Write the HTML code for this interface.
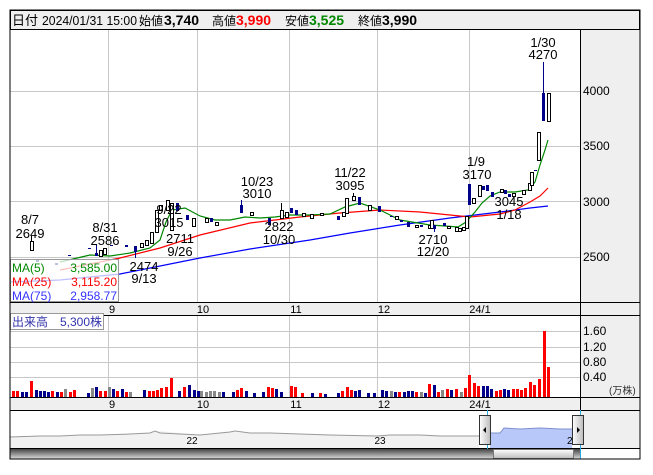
<!DOCTYPE html>
<html><head><meta charset="utf-8"><style>
body{margin:0;background:#fff;width:653px;height:470px;overflow:hidden;font-family:"Liberation Sans","Noto Sans CJK JP",sans-serif}
svg text{font-family:"Liberation Sans","Noto Sans CJK JP",sans-serif}
</style></head><body>
<svg id="s" width="653" height="470" xmlns="http://www.w3.org/2000/svg">
<rect x="10" y="10" width="630" height="449" fill="#fff" stroke="#000"/>
<rect x="10.5" y="10.5" width="629" height="19" fill="#efefef" stroke="#000"/>
<g font-size="13">
<text x="12" y="25">日付</text>
<text x="42" y="25" textLength="95" lengthAdjust="spacingAndGlyphs">2024/01/31 15:00</text>
<text x="139" y="25" font-size="12">始値</text>
<text x="164" y="25" font-weight="bold" font-size="14">3,740</text>
<text x="212" y="25" font-size="12">高値</text>
<text x="236" y="25" font-weight="bold" font-size="14" fill="#f00">3,990</text>
<text x="285" y="25" font-size="12">安値</text>
<text x="309" y="25" font-weight="bold" font-size="14" fill="#080">3,525</text>
<text x="358" y="25" font-size="12">終値</text>
<text x="382" y="25" font-weight="bold" font-size="14">3,990</text>
</g>
<rect x="580" y="30" width="60" height="272" fill="#efefef"/>
<rect x="580" y="315" width="60" height="82" fill="#efefef"/>
<rect x="580" y="410" width="60" height="38" fill="#efefef"/>
<rect x="10" y="302" width="630" height="13" fill="#efefef"/>
<rect x="10" y="397" width="630" height="13" fill="#efefef"/>
<g stroke="#000" stroke-width="1">
<line x1="580.5" y1="30" x2="580.5" y2="459"/>
<line x1="10" y1="302.5" x2="640" y2="302.5"/>
<line x1="10" y1="315.5" x2="640" y2="315.5"/>
<line x1="10" y1="397.5" x2="640" y2="397.5"/>
<line x1="10" y1="410.5" x2="640" y2="410.5"/>
<line x1="10" y1="448.5" x2="640" y2="448.5"/>
</g>
<g stroke="#c8c8c8" stroke-width="1">
<line x1="108.5" y1="30" x2="108.5" y2="302"/><line x1="197.5" y1="30" x2="197.5" y2="302"/><line x1="289.5" y1="30" x2="289.5" y2="302"/><line x1="377.5" y1="30" x2="377.5" y2="302"/><line x1="469.5" y1="30" x2="469.5" y2="302"/>
<line x1="10" y1="91.5" x2="580" y2="91.5"/><line x1="10" y1="146.5" x2="580" y2="146.5"/><line x1="10" y1="201.5" x2="580" y2="201.5"/><line x1="10" y1="257.5" x2="580" y2="257.5"/>
<line x1="108.5" y1="316" x2="108.5" y2="397"/><line x1="197.5" y1="316" x2="197.5" y2="397"/><line x1="289.5" y1="316" x2="289.5" y2="397"/><line x1="377.5" y1="316" x2="377.5" y2="397"/><line x1="469.5" y1="316" x2="469.5" y2="397"/>
<line x1="10" y1="331.5" x2="580" y2="331.5"/><line x1="10" y1="347.5" x2="580" y2="347.5"/><line x1="10" y1="362.5" x2="580" y2="362.5"/><line x1="10" y1="377.5" x2="580" y2="377.5"/>
</g>
<g font-size="12" fill="#000">
<text x="583" y="95">4000</text><text x="583" y="150">3500</text><text x="583" y="206">3000</text><text x="583" y="261">2500</text>
<text x="583" y="335">1.60</text><text x="583" y="351">1.20</text><text x="583" y="366">0.80</text><text x="583" y="381">0.40</text>
<text x="609" y="394" font-size="10" fill="#333">(万株)</text>
</g>
<g font-size="11" fill="#000" text-anchor="middle">
<text x="112" y="313">9</text><text x="203" y="313">10</text><text x="296" y="313">11</text><text x="384" y="313">12</text><text x="480" y="313">24/1</text>
<text x="112" y="408">9</text><text x="203" y="408">10</text><text x="296" y="408">11</text><text x="384" y="408">12</text><text x="480" y="408">24/1</text>
</g>
<polyline fill="none" stroke="#00f" stroke-width="1.2" points="10,282 60,280 120,274 200,258 250,249 310,240 350,233 400,225 450,218 500,212 530,208 548,206"/>
<polyline fill="none" stroke="#f00" stroke-width="1.2" points="60,270 120,258 160,248 200,235 250,223 300,217 340,213 380,210 420,212 450,215 470,217 500,214 515,210 530,202 540,196 548,188"/>
<polyline fill="none" stroke="#080" stroke-width="1.2" points="60,262 90,255 110,256 130,253 150,248 160,240 166,222 172,210 185,208 200,216 215,220 230,220 245,217 260,218 275,217 290,215 310,215 330,214 345,207 360,203 380,210 400,220 430,225 445,226 458,227 466,222 475,212 482,203 490,196 500,192 515,192 528,190 535,182 540,165 545,150 548,140"/>
<g id="candles"></g>
<g font-size="13" fill="#000" text-anchor="middle">
<text x="30" y="224">8/7</text><text x="30" y="238">2649</text>
<text x="105" y="232">8/31</text><text x="105" y="245">2586</text>
<text x="144" y="271">2474</text><text x="144" y="283">9/13</text>
<text x="169" y="214">9/22</text><text x="169" y="227">3015</text>
<text x="180" y="243">2711</text><text x="180" y="256">9/26</text>
<text x="257" y="186">10/23</text><text x="257" y="198">3010</text>
<text x="279" y="231">2822</text><text x="279" y="244">10/30</text>
<text x="350" y="177">11/22</text><text x="350" y="190">3095</text>
<text x="433" y="244">2710</text><text x="433" y="256">12/20</text>
<text x="476" y="166">1/9</text><text x="477" y="179">3170</text>
<text x="509" y="206">3045</text><text x="509" y="219">1/18</text>
<text x="543" y="47">1/30</text><text x="543" y="59">4270</text>
</g>
<rect x="10.5" y="259.5" width="108" height="42" fill="#fff" fill-opacity="0.75" stroke="#999"/>
<g font-size="12">
<text x="12" y="272" fill="#080">MA(5)</text><text x="117" y="272" fill="#080" text-anchor="end">3,585.00</text>
<text x="12" y="286" fill="#f00">MA(25)</text><text x="117" y="286" fill="#f00" text-anchor="end">3,115.20</text>
<text x="12" y="300" fill="#33f">MA(75)</text><text x="117" y="300" fill="#33f" text-anchor="end">2,958.77</text>
</g>
<rect x="10.5" y="313.5" width="93" height="16" fill="#fff" stroke="#999"/>
<text x="12" y="326" font-size="12" fill="#33a">出来高　5,300株</text>
<g id="vol"></g>
<polygon points="10,437 60,436 100,435 150,433 160,431 200,435 230,432 260,433 280,434 300,434 330,435 377,436 420,435 470,436 479,436 479,448 10,448" fill="#f2f2f2"/>
<polyline fill="none" stroke="#999" points="10,437 40,436 60,436 80,435 100,435 130,434 150,433 155,431 160,433 180,434 200,435 220,433 230,432 235,431 250,433 270,433 300,434 330,435 377,436 390,435 420,435 440,436 479,436"/>
<polygon points="490,433 500,433 504,428 520,429 540,428 560,429 572,429 572,448 490,448" fill="#b8c8f8"/>
<polyline fill="none" stroke="#8090d0" points="490,433 500,433 504,428 520,429 540,428 560,429 572,429"/>
<text x="192" y="444" font-size="10" text-anchor="middle">22</text>
<text x="380" y="444" font-size="10" text-anchor="middle">23</text>
<text x="567" y="444" font-size="10">24</text>
<line x1="487.5" y1="410" x2="487.5" y2="459" stroke="#29a8e0"/>
<line x1="580.5" y1="410" x2="580.5" y2="459" stroke="#29a8e0"/>
<defs><linearGradient id="g1" x1="0" y1="0" x2="0" y2="1"><stop offset="0" stop-color="#444"/><stop offset="1" stop-color="#ddd"/></linearGradient>
<linearGradient id="g2" x1="0" y1="0" x2="0" y2="1"><stop offset="0" stop-color="#fff"/><stop offset="1" stop-color="#bbb"/></linearGradient>
<linearGradient id="g3" x1="0" y1="0" x2="1" y2="0"><stop offset="0" stop-color="#fff"/><stop offset="1" stop-color="#bbb"/></linearGradient></defs>
<rect x="10" y="449" width="570" height="10" fill="url(#g1)"/>
<rect x="493.5" y="449.5" width="80" height="9" fill="url(#g2)" stroke="#777"/>
<rect x="479.5" y="415.5" width="11" height="29" fill="url(#g3)" stroke="#333"/>
<polygon points="483,430 486,427 486,433" fill="#000"/>
<rect x="572.5" y="415.5" width="11" height="29" fill="url(#g3)" stroke="#333"/>
<polygon points="580,430 577,427 577,433" fill="#000"/>
<rect x="10" y="10" width="630" height="449" fill="none" stroke="#000"/>
</svg>
<script>
var NS="http://www.w3.org/2000/svg";
function r(g,x,y,w,h,f,s){var e=document.createElementNS(NS,"rect");e.setAttribute("x",x);e.setAttribute("y",y);e.setAttribute("width",w);e.setAttribute("height",h);e.setAttribute("fill",f);if(s){e.setAttribute("stroke",s);}document.getElementById(g).appendChild(e);}
function l(x,y1,y2,c){var e=document.createElementNS(NS,"line");e.setAttribute("x1",x);e.setAttribute("x2",x);e.setAttribute("y1",y1);e.setAttribute("y2",y2);e.setAttribute("stroke",c);document.getElementById("candles").appendChild(e);}
var C=[[30,241,250,"w",236],[36,259,262,"b"],[55,263,265,"b"],[68,255,256,"b"],[88,248,249,"b"],[95,253,256,"b",245],[99,250,256,"w"],[103,248,254,"w"],[110,245,246,"b"],[125,245,247,"b"],[134,246,252,"b",258],[140,243,247,"w"],[145,240,245,"w"],[150,232,243,"w"],[155,210,232,"w"],[159,205,210,"w"],[166,200,210,"w"],[170,203,230,"w"],[176,203,211,"b"],[186,215,220,"b"],[192,218,226,"w"],[205,218,222,"w"],[210,218,222,"b"],[215,222,225,"w"],[240,205,213,"b",200],[250,212,215,"w"],[268,218,225,"b"],[280,210,218,"w",203],[285,212,217,"w"],[290,208,213,"b"],[295,210,215,"b"],[302,213,216,"w"],[310,214,218,"w"],[320,213,215,"w"],[337,216,220,"b"],[342,212,216,"w"],[345,198,213,"w"],[352,196,200,"w",193],[358,197,205,"b"],[368,205,210,"w"],[378,206,212,"b"],[390,216,217,"b"],[395,216,219,"w"],[400,220,222,"b"],[407,222,227,"b"],[415,225,227,"w"],[420,225,227,"b"],[428,225,228,"w"],[430,220,228,"w"],[433,225,229,"b",232],[443,223,226,"b"],[447,226,228,"w"],[455,227,231,"w"],[458,228,231,"w"],[462,227,230,"w"],[465,216,228,"w"],[468,184,205,"b"],[472,198,203,"w"],[478,185,196,"w"],[482,186,190,"b"],[486,185,191,"b"],[491,192,197,"b"],[500,189,192,"w"],[504,190,194,"b"],[508,194,197,"b"],[512,193,196,"w"],[522,190,194,"w"],[528,183,190,"w"],[530,172,185,"w"],[534,170,171,"b"],[537,132,160,"w"],[542,93,121,"b",62],[547,93,121,"w"]];
C.forEach(function(c){if(c[4])l(c[0]+1.5,c[4],c[1],c[3]=="b"?"#00008b":"#000");if(c[3]=="b")r("candles",c[0],c[1],3,Math.max(1,c[2]-c[1]),"#00008b");else r("candles",c[0]+.5,c[1]+.5,3,Math.max(1,c[2]-c[1]),"#fff","#000");});
var V="12r6 16r6 21b5 25b5 30r16 35b7 39b6 43b6 47b5 51r6 56b5 60r5 64g8 69r5 73r7 87b4 91g9 95b10 99r6 104r6 108g10 112b8 116r6 121b8 125r5 129g5 143b7 148r6 152r6 156r7 160r9 165r10 170r19 178b6 183r10 188b12 193b7 197b6 200g6 205g5 209g6 213g6 218g5 222b5 232b5 236r7 240r9 245b6 253b4 262b5 267r10 271r9 275b8 280b5 290r11 294r10 301r4 311b4 319r4 324b3 337b4 341r6 346r10 350r7 354b6 358b7 367b4 373b4 381b7 385b6 390g6 394b5 398r5 403b5 407b6 411b6 415r5 420g5 424b4 428r13 433b12 437r5 441g7 446r8 450b7 455r8 460g5 464r9 468r22 473r14 477r11 482b11 486b11 490b8 495r6 499r7 503b8 507b7 512r8 516r8 520r7 524r9 529r15 533r12 538r18 543r66 547r30".split(" ");
var cm={r:"#f00",b:"#00008b",g:"#888"};
V.forEach(function(s){var m=s.match(/(\d+)([rbg])(\d+)/);var x=+m[1],h=+m[3];r("vol",x,397-h,3,h,cm[m[2]]);});
</script>
</body></html>
